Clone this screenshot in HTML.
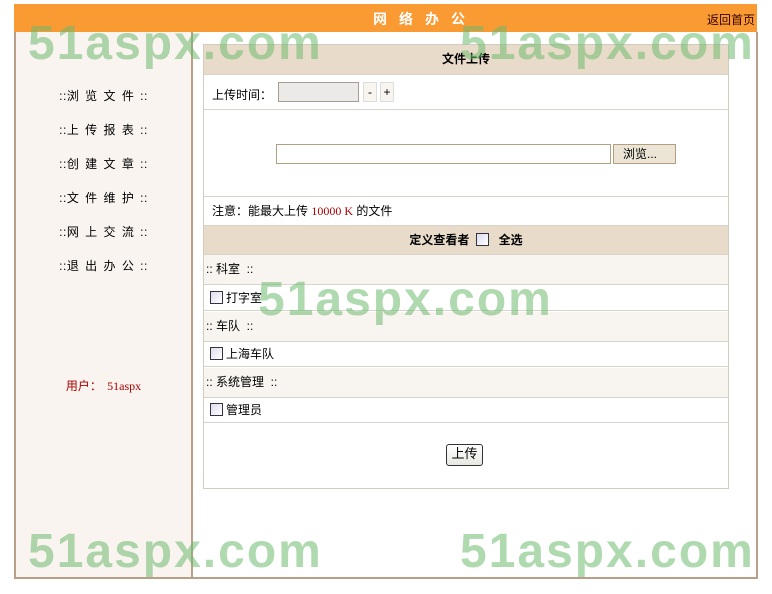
<!DOCTYPE html>
<html><head><meta charset="utf-8"><style>
body{margin:0;background:#fff;width:772px;height:594px;position:relative;overflow:hidden;font-family:"Liberation Sans","Noto Sans CJK SC",sans-serif;font-size:12px;color:#000}
.hdr{position:absolute;left:14px;top:4px;width:743px;height:28px;background:#f99a33}
.hdr .t{position:absolute;left:359px;top:5px;color:#fff;font-weight:bold;font-size:14px;letter-spacing:12px}
.hdr .r{position:absolute;right:2px;top:7px;color:#300;font-size:12px}
.box{position:absolute;left:14px;top:32px;width:740px;height:545px;border:2px solid #b8a088;border-top:none}
.side{position:absolute;left:0;top:0;width:175px;height:545px;background:#f9f4f0;border-right:2px solid #b8a088}
.m{position:absolute;left:0;width:175px;text-align:center;font-size:12px;letter-spacing:0.5px;word-spacing:2px}
.tbl{position:absolute;left:203px;top:44px;width:524px;height:443px;border:1px solid #d0ccc0;background:#fff}
.row{position:absolute;left:0;width:524px;border-bottom:1px solid #d8d4cc}
.cb{display:inline-block;width:11px;height:11px;border:1px solid #334;background:linear-gradient(135deg,#dde,#fff);vertical-align:-2px;margin-right:3px}
.wm{position:absolute;font-family:"Liberation Sans",sans-serif;font-weight:bold;font-size:48px;color:rgba(110,185,110,0.55);letter-spacing:2px}
</style></head><body>
<div class="hdr"><div class="t">网络办公</div><div class="r">返回首页</div></div>
<div class="box"><div class="side">
<div class="m" style="top:55px">::浏 览 文 件 ::</div>
<div class="m" style="top:89px">::上 传 报 表 ::</div>
<div class="m" style="top:123px">::创 建 文 章 ::</div>
<div class="m" style="top:157px">::文 件 维 护 ::</div>
<div class="m" style="top:191px">::网 上 交 流 ::</div>
<div class="m" style="top:225px">::退 出 办 公 ::</div>
<div class="m" style="top:345px;color:#a00;letter-spacing:0">用户： <span style="font-family:'Liberation Serif',serif">51aspx</span></div>
</div></div>
<div class="tbl">
<div class="row" style="top:0;height:29px;background:#e9dbca;text-align:center;line-height:29px;font-weight:bold">文件上传</div>
<div class="row" style="top:30px;height:34px"><span style="position:absolute;left:8px;top:11px">上传时间：</span>
<span style="position:absolute;left:74px;top:7px;width:79px;height:18px;border:1px solid #a89c90;background:#eceae8"></span>
<span style="position:absolute;left:159px;top:7px;width:12px;height:18px;border:1px solid #ddd;background:#f8f4f0;text-align:center;line-height:18px">-</span>
<span style="position:absolute;left:176px;top:7px;width:12px;height:18px;border:1px solid #ddd;background:#f8f4f0;text-align:center;line-height:18px">+</span></div>
<div class="row" style="top:65px;height:86px">
<span style="position:absolute;left:72px;top:34px;width:333px;height:18px;border:1px solid #b0a080;background:#fff"></span>
<span style="position:absolute;left:409px;top:34px;width:61px;height:18px;border:1px solid #b0a080;background:#ece4d4;line-height:18px;text-indent:9px">浏览...</span></div>
<div class="row" style="top:152px;height:28px;line-height:28px;text-indent:8px">注意：能最大上传 <span style="color:#a00;font-family:'Liberation Serif',serif">10000 K</span> 的文件</div>
<div class="row" style="top:181px;height:28px;background:#e9dbca;text-align:center;line-height:28px;font-weight:bold">定义查看者 &nbsp;<span class="cb" style="width:11px"></span>&nbsp; 全选</div>
<div class="row" style="top:210px;height:29px;background:#f8f4f0;line-height:29px;text-indent:2px">:: 科室 &nbsp;::</div>
<div class="row" style="top:240px;height:26px;line-height:26px;padding-left:6px;box-sizing:border-box"><span class="cb"></span>打字室</div>
<div class="row" style="top:267px;height:29px;background:#f8f4f0;line-height:29px;text-indent:2px">:: 车队 &nbsp;::</div>
<div class="row" style="top:297px;height:25px;line-height:25px;padding-left:6px;box-sizing:border-box"><span class="cb"></span>上海车队</div>
<div class="row" style="top:323px;height:29px;background:#f8f4f0;line-height:29px;text-indent:2px">:: 系统管理 &nbsp;::</div>
<div class="row" style="top:353px;height:25px;line-height:25px;padding-left:6px;box-sizing:border-box"><span class="cb"></span>管理员</div>
<span style="position:absolute;left:242px;top:399px;width:35px;height:20px;border:1px solid #333;border-radius:3px;background:linear-gradient(#fff,#e8e8e0);text-align:center;line-height:18px;font-size:13px">上传</span>
</div>
<div class="wm" style="left:28px;top:16px">51aspx.com</div>
<div class="wm" style="left:460px;top:16px">51aspx.com</div>
<div class="wm" style="left:258px;top:272px">51aspx.com</div>
<div class="wm" style="left:28px;top:524px">51aspx.com</div>
<div class="wm" style="left:460px;top:524px">51aspx.com</div>
</body></html>
